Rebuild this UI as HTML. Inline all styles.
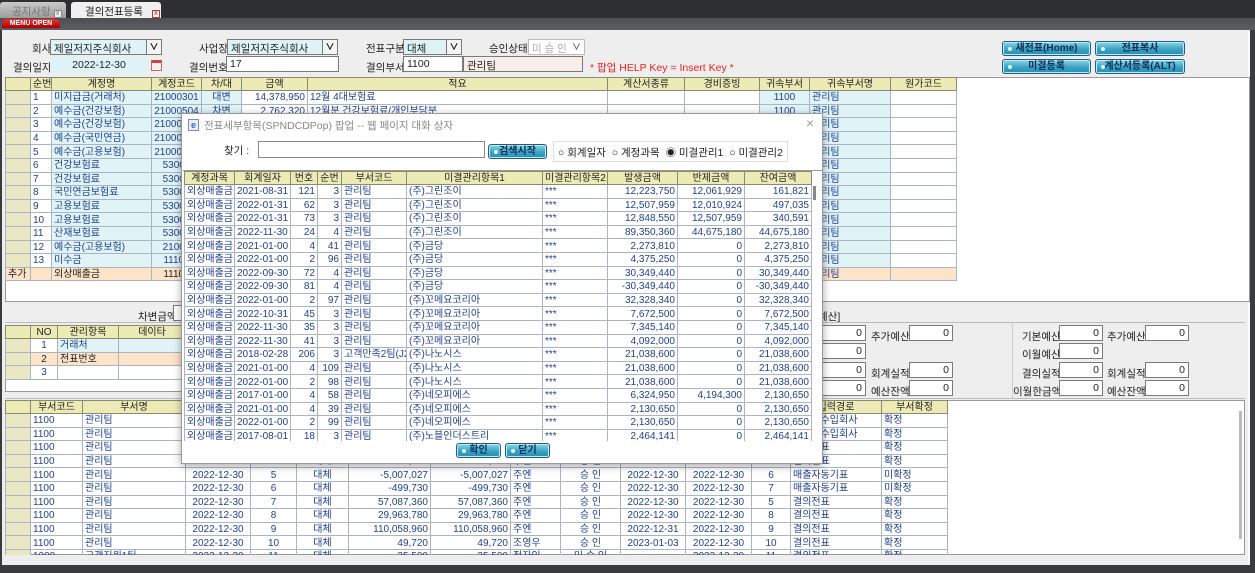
<!DOCTYPE html>
<html><head><meta charset="utf-8">
<style>
*{box-sizing:border-box}
body{margin:0;width:1255px;height:573px;overflow:hidden;background:#3a3b3d;font:10px "Liberation Sans","Noto Sans CJK KR","NanumGothic",sans-serif;color:#1f3f8f;position:relative}
.a{position:absolute}
.lbl{position:absolute;color:#222;font-size:10.5px;white-space:nowrap}
.inp{position:absolute;height:16px;border:1px solid #7a7a7a;background:#fff;color:#222;font-size:10.5px;padding:1px 3px;white-space:nowrap;overflow:hidden}
.sel{background:#dff2f8}
.arr{position:absolute;right:0;top:0;width:15px;height:14px;border-left:1px solid #777;background:#f4f4f4;text-align:center;font-size:9px;line-height:14px;color:#000;font-weight:bold}
.btn{position:absolute;height:15px;border:1px solid #1f5f80;border-radius:3px;background:linear-gradient(#8fd6e8,#3aa3c4 55%,#2b8db0);color:#0d2f5a;font-weight:bold;font-size:10px;text-align:center;line-height:13px;box-shadow:inset 0 0 0 1px #bfe9f4}
.btn:before{content:"";position:absolute;left:5px;top:5px;width:4px;height:4px;border-radius:50%;background:#dff}
table{border-collapse:collapse;table-layout:fixed;position:absolute}
td{border:1px solid #a9b4c4;padding:1px 2px 0;height:13.6px;line-height:11px;white-space:nowrap;overflow:hidden;font-size:10px;color:#1f3f8f;vertical-align:middle}
tr.h td{background:#ecebb6;color:#222;text-align:center;height:13px;border-color:#8a8a70}
td.i{background:#e9e7c4}
td.b{background:#e0f4f8}
td.o{background:#fde3c8}
.r{text-align:right}.c{text-align:center}
</style></head><body>
<div class="a" style="left:0;top:0;width:1255px;height:18px;background:#2e2f31"></div>
<div class="a" style="left:0;top:2px;width:66px;height:16px;background:linear-gradient(#c9c9c9,#9c9c9c);border-radius:3px 3px 0 0;color:#777;font-size:10.5px;padding:2px 0 0 12px">공지사항 <span style="display:inline-block;width:8px;height:8px;border:1px solid #888;font-size:7px;line-height:6px;text-align:center;background:#eee">x</span></div>
<div class="a" style="left:71px;top:2px;width:90px;height:16px;background:#f0f0f0;border-radius:3px 3px 0 0;color:#222;font-size:10.5px;padding:2px 0 0 14px">결의전표등록 <span style="display:inline-block;width:8px;height:8px;border:1px solid #c33;color:#c00;font-size:7px;line-height:6px;text-align:center;background:#fff;margin-left:6px">x</span></div>
<div class="a" style="left:0;top:18px;width:1255px;height:12px;background:linear-gradient(#4d4f52,#5b5d60)"></div>
<div class="a" style="left:2px;top:19px;width:58px;height:9px;border-radius:5px 5px 0 0;background:linear-gradient(#e33,#a00);color:#fff;font-size:7px;font-weight:bold;text-align:center;line-height:9px">MENU OPEN</div>
<div class="a" style="left:2px;top:30px;width:1248px;height:535px;background:#eeeeee;border-right:2px solid #fafafa"></div>
<div class="a" style="left:0;top:565px;width:1255px;height:8px;background:#3a3b3d"></div>

<div class="lbl" style="left:32px;top:41px">회사</div>
<div class="inp sel" style="left:50px;top:39px;width:112px">제일저지주식회사<div class="arr">&#8744;</div></div>
<div class="lbl" style="left:199px;top:41px">사업장</div>
<div class="inp sel" style="left:227px;top:39px;width:111px">제일저지주식회사<div class="arr">&#8744;</div></div>
<div class="lbl" style="left:366px;top:41px">전표구분</div>
<div class="inp sel" style="left:403px;top:39px;width:59px">대체<div class="arr">&#8744;</div></div>
<div class="lbl" style="left:489px;top:41px">승인상태</div>
<div class="inp" style="left:528px;top:39px;width:57px;color:#aaa;border-color:#bbb">미 승 인<div class="arr" style="border:0;background:#fff;color:#666">&#8744;</div></div>
<div class="lbl" style="left:13px;top:60px">결의일자</div>
<div class="inp" style="left:50px;top:57px;width:98px;background:#dff2f8;border-color:#dff2f8;text-align:center">2022-12-30</div>
<div class="a" style="left:151px;top:60px;width:11px;height:11px;background:#f2f2f2;border:1px solid #c66;border-top:3px solid #c44"></div>
<div class="lbl" style="left:189px;top:60px">결의번호</div>
<div class="inp" style="left:226px;top:56px;width:113px">17</div>
<div class="lbl" style="left:366px;top:60px">결의부서</div>
<div class="inp" style="left:403px;top:56px;width:60px">1100</div>
<div class="inp" style="left:463px;top:56px;width:120px;background:#f7eeea">관리팀</div>
<div class="lbl" style="left:590px;top:60px;color:#e22">* 팝업 HELP Key = Insert Key *</div>
<div class="btn" style="left:1002px;top:41px;width:89px">새전표(Home)</div>
<div class="btn" style="left:1095px;top:41px;width:90px">전표복사</div>
<div class="btn" style="left:1002px;top:59px;width:89px">미결등록</div>
<div class="btn" style="left:1095px;top:59px;width:90px">계산서등록(ALT)</div>

<div class="a" style="left:5px;top:77px;width:1245px;height:225px;background:#fff;border:1px solid #999"></div>
<table style="left:5px;top:77px;width:951px">
<colgroup><col style="width:25px"><col style="width:21px"><col style="width:100px"><col style="width:50px"><col style="width:40px"><col style="width:66px"><col style="width:300px"><col style="width:77px"><col style="width:75px"><col style="width:50px"><col style="width:81px"><col style="width:66px"></colgroup>
<tr class="h"><td></td><td>순번</td><td>계정명</td><td>계정코드</td><td>차/대</td><td>금액</td><td>적요</td><td>계산서종류</td><td>경비증빙</td><td>귀속부서</td><td>귀속부서명</td><td>원가코드</td></tr>
<tr><td class="i"></td><td>1</td><td class="b">미지급금(거래처)</td><td class="b c">21000301</td><td class="b c">대변</td><td class="r">14,378,950</td><td>12월 4대보험료</td><td></td><td></td><td class="b c">1100</td><td class="b">관리팀</td><td></td></tr>
<tr><td class="i"></td><td>2</td><td class="b">예수금(건강보험)</td><td class="b c">21000504</td><td class="b c">차변</td><td class="r">2,762,320</td><td>12월분 건강보험료/개인부담분</td><td></td><td></td><td class="b c">1100</td><td class="b">관리팀</td><td></td></tr>
<tr><td class="i"></td><td>3</td><td class="b">예수금(건강보험)</td><td class="b c">21000504</td><td class="b c"></td><td></td><td></td><td></td><td></td><td class="b c">1100</td><td class="b">관리팀</td><td></td></tr>
<tr><td class="i"></td><td>4</td><td class="b">예수금(국민연금)</td><td class="b c">21000502</td><td class="b"></td><td></td><td></td><td></td><td></td><td class="b c">1100</td><td class="b">관리팀</td><td></td></tr>
<tr><td class="i"></td><td>5</td><td class="b">예수금(고용보험)</td><td class="b c">21000503</td><td class="b"></td><td></td><td></td><td></td><td></td><td class="b c">1100</td><td class="b">관리팀</td><td></td></tr>
<tr><td class="i"></td><td>6</td><td class="b">건강보험료</td><td class="b c">53002</td><td class="b"></td><td></td><td></td><td></td><td></td><td class="b c">1100</td><td class="b">관리팀</td><td></td></tr>
<tr><td class="i"></td><td>7</td><td class="b">건강보험료</td><td class="b c">53002</td><td class="b"></td><td></td><td></td><td></td><td></td><td class="b c">1100</td><td class="b">관리팀</td><td></td></tr>
<tr><td class="i"></td><td>8</td><td class="b">국민연금보험료</td><td class="b c">53002</td><td class="b"></td><td></td><td></td><td></td><td></td><td class="b c">1100</td><td class="b">관리팀</td><td></td></tr>
<tr><td class="i"></td><td>9</td><td class="b">고용보험료</td><td class="b c">53002</td><td class="b"></td><td></td><td></td><td></td><td></td><td class="b c">1100</td><td class="b">관리팀</td><td></td></tr>
<tr><td class="i"></td><td>10</td><td class="b">고용보험료</td><td class="b c">53002</td><td class="b"></td><td></td><td></td><td></td><td></td><td class="b c">1100</td><td class="b">관리팀</td><td></td></tr>
<tr><td class="i"></td><td>11</td><td class="b">산재보험료</td><td class="b c">53002</td><td class="b"></td><td></td><td></td><td></td><td></td><td class="b c">1100</td><td class="b">관리팀</td><td></td></tr>
<tr><td class="i"></td><td>12</td><td class="b">예수금(고용보험)</td><td class="b c">21000</td><td class="b"></td><td></td><td></td><td></td><td></td><td class="b c">1100</td><td class="b">관리팀</td><td></td></tr>
<tr><td class="i"></td><td>13</td><td class="b">미수금</td><td class="b c">11100</td><td class="b"></td><td></td><td></td><td></td><td></td><td class="b c">1100</td><td class="b">관리팀</td><td></td></tr>
<tr><td class="o" style="color:#222">추가</td><td class="o"></td><td class="o" style="color:#222">외상매출금</td><td class="o c" style="color:#222">11100</td><td class="o"></td><td class="o"></td><td class="o"></td><td class="o"></td><td class="o"></td><td class="o"></td><td class="o">관리팀</td><td class="o"></td></tr>
</table>

<div class="lbl" style="left:138px;top:309px">차변금액</div>
<div class="inp" style="left:173px;top:305px;width:20px"></div>
<div class="lbl" style="left:818px;top:309px">예산]</div>
<div class="a" style="left:5px;top:322px;width:1240px;height:1px;background:#bbb"></div>

<div class="a" style="left:5px;top:325px;width:180px;height:67px;background:#fff;border:1px solid #999"></div>
<table style="left:5px;top:325px;width:180px">
<colgroup><col style="width:25px"><col style="width:27px"><col style="width:61px"><col style="width:67px"></colgroup>
<tr class="h"><td></td><td>NO</td><td>관리항목</td><td>데이타</td></tr>
<tr><td class="i"></td><td class="c">1</td><td class="b">거래처</td><td class="b"></td></tr>
<tr><td class="i"></td><td class="c o" style="color:#222">2</td><td class="o" style="color:#222">전표번호</td><td class="o"></td></tr>
<tr><td class="i"></td><td class="c">3</td><td></td><td></td></tr>
</table>

<div class="inp r" style="left:822px;top:325px;width:44px;text-align:right">0</div>
<div class="inp r" style="left:822px;top:343px;width:44px;text-align:right">0</div>
<div class="inp r" style="left:822px;top:362px;width:44px;text-align:right">0</div>
<div class="inp r" style="left:822px;top:380px;width:44px;text-align:right">0</div>
<div class="lbl" style="left:871px;top:329px">추가예산</div><div class="inp" style="left:909px;top:325px;width:44px;text-align:right">0</div>
<div class="lbl" style="left:871px;top:366px">회계실적</div><div class="inp" style="left:909px;top:362px;width:44px;text-align:right">0</div>
<div class="lbl" style="left:871px;top:384px">예산잔액</div><div class="inp" style="left:909px;top:380px;width:44px;text-align:right">0</div>
<div class="a" style="left:1012px;top:323px;width:1px;height:75px;background:#ccc"></div>
<div class="lbl" style="left:1022px;top:329px">기본예산</div><div class="inp" style="left:1059px;top:325px;width:44px;text-align:right">0</div>
<div class="lbl" style="left:1107px;top:329px">추가예산</div><div class="inp" style="left:1145px;top:325px;width:44px;text-align:right">0</div>
<div class="lbl" style="left:1022px;top:347px">이월예산</div><div class="inp" style="left:1059px;top:343px;width:44px;text-align:right">0</div>
<div class="lbl" style="left:1022px;top:366px">결의실적</div><div class="inp" style="left:1059px;top:362px;width:44px;text-align:right">0</div>
<div class="lbl" style="left:1107px;top:366px">회계실적</div><div class="inp" style="left:1145px;top:362px;width:44px;text-align:right">0</div>
<div class="lbl" style="left:1013px;top:384px">이월한금액</div><div class="inp" style="left:1059px;top:380px;width:44px;text-align:right">0</div>
<div class="lbl" style="left:1107px;top:384px">예산잔액</div><div class="inp" style="left:1145px;top:380px;width:44px;text-align:right">0</div>
<div class="a" style="left:5px;top:398px;width:1240px;height:1px;background:#bbb"></div>

<div class="a" style="left:5px;top:400px;width:1240px;height:155px;background:#fff;border:1px solid #999;overflow:hidden"></div>
<div class="a" style="left:1239px;top:411px;width:3px;height:128px;background:#bbb"></div>
<div class="a" style="left:5px;top:400px;width:945px;height:155px;overflow:hidden">
<table style="left:0;top:0;width:942px">
<colgroup><col style="width:25px"><col style="width:52px"><col style="width:103px"><col style="width:65px"><col style="width:46px"><col style="width:52px"><col style="width:82px"><col style="width:80px"><col style="width:50px"><col style="width:60px"><col style="width:65px"><col style="width:66px"><col style="width:39px"><col style="width:91px"><col style="width:66px"></colgroup>
<tr class="h"><td></td><td>부서코드</td><td>부서명</td><td>결의일자</td><td>번호</td><td>구분</td><td>차변금액</td><td>대변금액</td><td>작성자</td><td>승인</td><td>승인일자</td><td>회계일자</td><td>번호</td><td>입력경로</td><td>부서확정</td></tr>
<tr><td class="i"></td><td>1100</td><td>관리팀</td><td class="c">2022-12-30</td><td class="c">1</td><td class="c">대체</td><td class="r">1,000</td><td class="r">1,000</td><td>주엔</td><td class="c">승 인</td><td class="c">2022-12-30</td><td class="c">2022-12-30</td><td class="c">1</td><td>계산서수입회사</td><td>확정</td></tr>
<tr><td class="i"></td><td>1100</td><td>관리팀</td><td class="c">2022-12-30</td><td class="c">2</td><td class="c">대체</td><td class="r">1,000</td><td class="r">1,000</td><td>주엔</td><td class="c">승 인</td><td class="c">2022-12-30</td><td class="c">2022-12-30</td><td class="c">2</td><td>계산서수입회사</td><td>확정</td></tr>
<tr><td class="i"></td><td>1100</td><td>관리팀</td><td class="c">2022-12-30</td><td class="c">3</td><td class="c">대체</td><td class="r">1,000</td><td class="r">1,000</td><td>주엔</td><td class="c">승 인</td><td class="c">2022-12-30</td><td class="c">2022-12-30</td><td class="c">3</td><td>결의전표</td><td>확정</td></tr>
<tr><td class="i"></td><td>1100</td><td>관리팀</td><td class="c">2022-12-30</td><td class="c">4</td><td class="c">대체</td><td class="r">1,000</td><td class="r">1,000</td><td>주엔</td><td class="c">승 인</td><td class="c">2022-12-30</td><td class="c">2022-12-30</td><td class="c">4</td><td>결의전표</td><td>확정</td></tr>
<tr><td class="i"></td><td>1100</td><td>관리팀</td><td class="c">2022-12-30</td><td class="c">5</td><td class="c">대체</td><td class="r">-5,007,027</td><td class="r">-5,007,027</td><td>주엔</td><td class="c">승 인</td><td class="c">2022-12-30</td><td class="c">2022-12-30</td><td class="c">6</td><td>매출자동기표</td><td>미확정</td></tr>
<tr><td class="i"></td><td>1100</td><td>관리팀</td><td class="c">2022-12-30</td><td class="c">6</td><td class="c">대체</td><td class="r">-499,730</td><td class="r">-499,730</td><td>주엔</td><td class="c">승 인</td><td class="c">2022-12-30</td><td class="c">2022-12-30</td><td class="c">7</td><td>매출자동기표</td><td>미확정</td></tr>
<tr><td class="i"></td><td>1100</td><td>관리팀</td><td class="c">2022-12-30</td><td class="c">7</td><td class="c">대체</td><td class="r">57,087,360</td><td class="r">57,087,360</td><td>주엔</td><td class="c">승 인</td><td class="c">2022-12-30</td><td class="c">2022-12-30</td><td class="c">5</td><td>결의전표</td><td>확정</td></tr>
<tr><td class="i"></td><td>1100</td><td>관리팀</td><td class="c">2022-12-30</td><td class="c">8</td><td class="c">대체</td><td class="r">29,963,780</td><td class="r">29,963,780</td><td>주엔</td><td class="c">승 인</td><td class="c">2022-12-30</td><td class="c">2022-12-30</td><td class="c">8</td><td>결의전표</td><td>확정</td></tr>
<tr><td class="i"></td><td>1100</td><td>관리팀</td><td class="c">2022-12-30</td><td class="c">9</td><td class="c">대체</td><td class="r">110,058,960</td><td class="r">110,058,960</td><td>주엔</td><td class="c">승 인</td><td class="c">2022-12-31</td><td class="c">2022-12-30</td><td class="c">9</td><td>결의전표</td><td>확정</td></tr>
<tr><td class="i"></td><td>1100</td><td>관리팀</td><td class="c">2022-12-30</td><td class="c">10</td><td class="c">대체</td><td class="r">49,720</td><td class="r">49,720</td><td>조영우</td><td class="c">승 인</td><td class="c">2023-01-03</td><td class="c">2022-12-30</td><td class="c">10</td><td>결의전표</td><td>확정</td></tr>
<tr><td class="i"></td><td>1000</td><td>고객지원1팀</td><td class="c">2022-12-30</td><td class="c">11</td><td class="c">대체</td><td class="r">35,500</td><td class="r">35,500</td><td>정자인</td><td class="c">미 승 인</td><td class="c"></td><td class="c">2022-12-30</td><td class="c">11</td><td>결의전표</td><td>확정</td></tr>
</table></div>

<div class="a" style="left:181px;top:113px;width:642px;height:351px;background:#fff;border:1px solid #9a9a9a;box-shadow:0 2px 8px rgba(0,0,0,.35)">
 <div class="a" style="left:6px;top:5px;width:11px;height:12px;border:1px solid #88a;background:#e8f0ff;color:#2a6ad0;font-size:9px;font-weight:bold;line-height:10px;text-align:center">e</div>
 <div class="a" style="left:22px;top:4px;color:#888;font-size:10.5px">전표세부항목(SPNDCDPop) 팝업 -- 웹 페이지 대화 상자</div>
 <div class="a" style="left:624px;top:1px;color:#999;font-size:14px">×</div>
 <div class="a" style="left:42px;top:29px;color:#222;font-size:10.5px">찾기 :</div>
 <div class="a" style="left:76px;top:27px;width:227px;height:17px;border:1px solid #888"></div>
 <div class="btn" style="left:306px;top:30px;width:59px">검색시작</div>
 <div class="a" style="left:371px;top:27px;width:235px;height:21px;border:1px solid #ddd;color:#222;font-size:10.5px;padding:3px 0 0 4px;white-space:nowrap">○ 회계일자 &nbsp;○ 계정과목 &nbsp;◉ 미결관리1 &nbsp;○ 미결관리2</div>
 <div class="a" style="left:1px;top:56px;width:639px;height:271px;overflow:hidden;border-top:1px solid #999">
 <div class="a" style="left:630px;top:15px;width:3px;height:14px;background:#888"></div>
 <table style="left:1px;top:0;width:627px">
 <colgroup><col style="width:50px"><col style="width:56px"><col style="width:27px"><col style="width:24px"><col style="width:65px"><col style="width:136px"><col style="width:65px"><col style="width:70px"><col style="width:67px"><col style="width:67px"></colgroup>
 <tr class="h"><td>계정과목</td><td>회계일자</td><td>번호</td><td>순번</td><td>부서코드</td><td>미결관리항목1</td><td>미결관리항목2</td><td>발생금액</td><td>반제금액</td><td>잔여금액</td></tr>
 <tr><td>외상매출금</td><td class="c">2021-08-31</td><td class="r">121</td><td class="r">3</td><td>관리팀</td><td>(주)그린조이</td><td>***</td><td class="r">12,223,750</td><td class="r">12,061,929</td><td class="r">161,821</td></tr>
 <tr><td>외상매출금</td><td class="c">2022-01-31</td><td class="r">62</td><td class="r">3</td><td>관리팀</td><td>(주)그린조이</td><td>***</td><td class="r">12,507,959</td><td class="r">12,010,924</td><td class="r">497,035</td></tr>
 <tr><td>외상매출금</td><td class="c">2022-01-31</td><td class="r">73</td><td class="r">3</td><td>관리팀</td><td>(주)그린조이</td><td>***</td><td class="r">12,848,550</td><td class="r">12,507,959</td><td class="r">340,591</td></tr>
 <tr><td>외상매출금</td><td class="c">2022-11-30</td><td class="r">24</td><td class="r">4</td><td>관리팀</td><td>(주)그린조이</td><td>***</td><td class="r">89,350,360</td><td class="r">44,675,180</td><td class="r">44,675,180</td></tr>
 <tr><td>외상매출금</td><td class="c">2021-01-00</td><td class="r">4</td><td class="r">41</td><td>관리팀</td><td>(주)금당</td><td>***</td><td class="r">2,273,810</td><td class="r">0</td><td class="r">2,273,810</td></tr>
 <tr><td>외상매출금</td><td class="c">2022-01-00</td><td class="r">2</td><td class="r">96</td><td>관리팀</td><td>(주)금당</td><td>***</td><td class="r">4,375,250</td><td class="r">0</td><td class="r">4,375,250</td></tr>
 <tr><td>외상매출금</td><td class="c">2022-09-30</td><td class="r">72</td><td class="r">4</td><td>관리팀</td><td>(주)금당</td><td>***</td><td class="r">30,349,440</td><td class="r">0</td><td class="r">30,349,440</td></tr>
 <tr><td>외상매출금</td><td class="c">2022-09-30</td><td class="r">81</td><td class="r">4</td><td>관리팀</td><td>(주)금당</td><td>***</td><td class="r">-30,349,440</td><td class="r">0</td><td class="r">-30,349,440</td></tr>
 <tr><td>외상매출금</td><td class="c">2022-01-00</td><td class="r">2</td><td class="r">97</td><td>관리팀</td><td>(주)꼬메요코리아</td><td>***</td><td class="r">32,328,340</td><td class="r">0</td><td class="r">32,328,340</td></tr>
 <tr><td>외상매출금</td><td class="c">2022-10-31</td><td class="r">45</td><td class="r">3</td><td>관리팀</td><td>(주)꼬메요코리아</td><td>***</td><td class="r">7,672,500</td><td class="r">0</td><td class="r">7,672,500</td></tr>
 <tr><td>외상매출금</td><td class="c">2022-11-30</td><td class="r">35</td><td class="r">3</td><td>관리팀</td><td>(주)꼬메요코리아</td><td>***</td><td class="r">7,345,140</td><td class="r">0</td><td class="r">7,345,140</td></tr>
 <tr><td>외상매출금</td><td class="c">2022-11-30</td><td class="r">41</td><td class="r">3</td><td>관리팀</td><td>(주)꼬메요코리아</td><td>***</td><td class="r">4,092,000</td><td class="r">0</td><td class="r">4,092,000</td></tr>
 <tr><td>외상매출금</td><td class="c">2018-02-28</td><td class="r">206</td><td class="r">3</td><td>고객만족2팀(J2</td><td>(주)나노시스</td><td>***</td><td class="r">21,038,600</td><td class="r">0</td><td class="r">21,038,600</td></tr>
 <tr><td>외상매출금</td><td class="c">2021-01-00</td><td class="r">4</td><td class="r">109</td><td>관리팀</td><td>(주)나노시스</td><td>***</td><td class="r">21,038,600</td><td class="r">0</td><td class="r">21,038,600</td></tr>
 <tr><td>외상매출금</td><td class="c">2022-01-00</td><td class="r">2</td><td class="r">98</td><td>관리팀</td><td>(주)나노시스</td><td>***</td><td class="r">21,038,600</td><td class="r">0</td><td class="r">21,038,600</td></tr>
 <tr><td>외상매출금</td><td class="c">2017-01-00</td><td class="r">4</td><td class="r">58</td><td>관리팀</td><td>(주)네오피에스</td><td>***</td><td class="r">6,324,950</td><td class="r">4,194,300</td><td class="r">2,130,650</td></tr>
 <tr><td>외상매출금</td><td class="c">2021-01-00</td><td class="r">4</td><td class="r">39</td><td>관리팀</td><td>(주)네오피에스</td><td>***</td><td class="r">2,130,650</td><td class="r">0</td><td class="r">2,130,650</td></tr>
 <tr><td>외상매출금</td><td class="c">2022-01-00</td><td class="r">2</td><td class="r">99</td><td>관리팀</td><td>(주)네오피에스</td><td>***</td><td class="r">2,130,650</td><td class="r">0</td><td class="r">2,130,650</td></tr>
 <tr><td>외상매출금</td><td class="c">2017-08-01</td><td class="r">18</td><td class="r">3</td><td>관리팀</td><td>(주)노블인더스트리</td><td>***</td><td class="r">2,464,141</td><td class="r">0</td><td class="r">2,464,141</td></tr>
 </table></div>
 <div class="btn" style="left:274px;top:329px;width:45px">확인</div>
 <div class="btn" style="left:323px;top:329px;width:45px">닫기</div>
</div>
</body></html>
